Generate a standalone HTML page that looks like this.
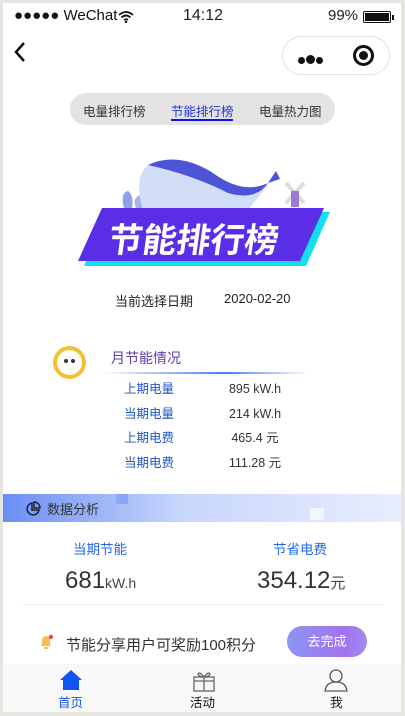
<!DOCTYPE html>
<html><head><meta charset="utf-8"><style>
*{margin:0;padding:0;box-sizing:border-box}
body{width:405px;height:716px;background:#e6e5e1;font-family:"Liberation Sans","Noto Sans CJK SC",sans-serif;position:relative;overflow:hidden}
.page{position:absolute;left:3px;top:3px;width:398px;height:709px;background:#fff;overflow:hidden}
.a{position:absolute;white-space:nowrap}
</style></head><body>
<div class="page">
<div class="a" style="left:11px;top:4px;font-size:15px;color:#111">●●●●● WeChat</div>
<svg class="a" style="left:115px;top:8px" width="16" height="12" viewBox="0 0 16 12"><path d="M1 4Q8 -2 15 4M3.5 6.5Q8 2.5 12.5 6.5M6 9Q8 7.5 10 9" stroke="#111" stroke-width="1.8" fill="none"/><circle cx="8" cy="11" r="1.2" fill="#111"/></svg>
<div class="a" style="left:180px;top:4px;font-size:16px;color:#222">14:12</div>
<div class="a" style="left:325px;top:4px;font-size:15px;color:#222">99%</div>
<div class="a" style="left:360px;top:8px;width:28px;height:12px;border:1.5px solid #111;border-radius:2px;padding:1px"><div style="width:100%;height:100%;background:#111"></div></div>
<div class="a" style="left:389px;top:12px;width:2px;height:5px;background:#111"></div>
<svg class="a" style="left:10px;top:38px" width="14" height="22" viewBox="0 0 14 22"><path d="M11 2L3 11L11 20" stroke="#111" stroke-width="2.5" fill="none"/></svg>
<div class="a" style="left:279px;top:33px;width:108px;height:39px;border:1px solid #e3e3e3;border-radius:20px"></div>
<div class="a" style="left:295px;top:48px"><span style="display:inline-block;width:7px;height:7px;border-radius:50%;background:#111"></span><span style="display:inline-block;width:9px;height:9px;border-radius:50%;background:#111;margin:0 1px"></span><span style="display:inline-block;width:7px;height:7px;border-radius:50%;background:#111"></span></div>
<div class="a" style="left:350px;top:42px;width:21px;height:21px;border:3px solid #111;border-radius:50%"><div style="margin:3px;width:9px;height:9px;border-radius:50%;background:#111"></div></div>

<div class="a" style="left:67px;top:90px;width:265px;height:32px;background:#e3e3e3;border-radius:16px"></div>
<div class="a" style="left:80px;top:98px;font-size:12.5px;color:#333">电量排行榜</div>
<div class="a" style="left:168px;top:98px;font-size:12.5px;color:#2233dd">节能排行榜</div>
<div class="a" style="left:168px;top:116px;width:62px;height:2px;background:#1111ee"></div>
<div class="a" style="left:256px;top:98px;font-size:12.5px;color:#333">电量热力图</div>

<svg class="a" style="left:115px;top:150px" width="220" height="60" viewBox="0 0 220 60">
<path d="M6 55Q2 40 10 38Q16 42 14 55Z" fill="#8fa2e8"/>
<path d="M18 55Q14 45 22 42Q28 48 26 55Z" fill="#a3b4ec"/>
<path d="M25 57Q15 25 30 12Q60 -2 100 25Q120 40 150 32L130 57Z" fill="#d2ddf8"/>
<path d="M30 12Q60 -2 95 20Q125 42 150 30Q138 48 110 40Q75 22 30 12Z" fill="#4e54d8"/>
<path d="M150 30L158 18L162 26Z" fill="#4e54d8"/>
<path d="M168 30L186 50M186 30L168 50" stroke="#ddd" stroke-width="4"/><rect x="173" y="38" width="8" height="16" fill="#9a7ad8"/>
</svg>
<svg class="a" style="left:75px;top:203px" width="255" height="62" viewBox="0 0 255 62">
<path d="M30 6L252 6L228 60L6 60Z" fill="#10e0f0"/>
<path d="M24 2L246 2L222 55L0 55Z" fill="#5a2de6"/>
</svg>
<div class="a" style="left:106px;top:210px;font-size:34px;font-weight:bold;color:#fff;transform:skewX(-8deg)">节能排行榜</div>

<div class="a" style="left:112px;top:288px;font-size:13px;color:#222">当前选择日期</div>
<div class="a" style="left:221px;top:288px;font-size:13px;color:#222">2020-02-20</div>

<div class="a" style="left:50px;top:343px;width:33px;height:33px;border-radius:50%;background:#f5c030"><div style="margin:4px;width:25px;height:25px;border-radius:50%;background:#fff"><div style="position:absolute;left:11px;top:13px;width:4px;height:4px;border-radius:50%;background:#333"></div><div style="position:absolute;left:18px;top:13px;width:4px;height:4px;border-radius:50%;background:#333"></div></div></div>
<div class="a" style="left:108px;top:345px;font-size:14px;color:#5b3fa8">月节能情况</div>
<div class="a" style="left:96px;top:369px;width:210px;height:1.5px;background:linear-gradient(90deg,#fff,#4a7df0 60%,#fff)"></div>
<div class="a" style="left:121px;top:374px;font-size:12.5px;color:#2255cc;line-height:24.7px">上期电量<br>当期电量<br>上期电费<br>当期电费</div>
<div class="a" style="left:222px;top:374px;width:60px;text-align:center;font-size:12.5px;color:#333;line-height:24.7px">895 kW.h<br>214 kW.h<br>465.4 元<br>111.28 元</div>

<div class="a" style="left:0;top:491px;width:398px;height:28px;background:linear-gradient(90deg,#6a8ef5,#c8d6fb 45%,#e8eefd)"></div>
<div class="a" style="left:113px;top:491px;width:12px;height:10px;background:#8aa6f7"></div>
<div class="a" style="left:307px;top:505px;width:14px;height:12px;background:#f3f6fe"></div>
<svg class="a" style="left:22px;top:498px" width="16" height="16" viewBox="0 0 16 16"><path d="M7 2A6 6 0 1 0 14 9L7 9Z" fill="none" stroke="#223" stroke-width="1.5"/><path d="M9 1L9 7L15 7A6 6 0 0 0 9 1Z" fill="none" stroke="#223" stroke-width="1.5"/></svg>
<div class="a" style="left:44px;top:496px;font-size:13px;color:#333">数据分析</div>

<div class="a" style="left:70px;top:535px;font-size:13.5px;color:#2266ee">当期节能</div>
<div class="a" style="left:270px;top:535px;font-size:13.5px;color:#2266ee">节省电费</div>
<div class="a" style="left:62px;top:564px;font-size:24px;color:#333">681<span style="font-size:14px;color:#444">kW.h</span></div>
<div class="a" style="left:254px;top:564px;font-size:24px;color:#333">354.12<span style="font-size:15px;color:#444">元</span></div>
<div class="a" style="left:20px;top:601px;width:360px;height:1px;background:#eee"></div>

<svg class="a" style="left:36px;top:630px" width="16" height="18" viewBox="0 0 16 18"><path d="M2 13Q3 12 3 8Q3 3 7 3Q11 3 11 8Q11 12 12 13Z" fill="#f5c050"/><rect x="5" y="14" width="4" height="2" fill="#f5c050"/><circle cx="12" cy="4" r="2.2" fill="#e44"/></svg>
<div class="a" style="left:63px;top:631px;font-size:15px;color:#333">节能分享用户可奖励100积分</div>
<div class="a" style="left:284px;top:623px;width:80px;height:31px;border-radius:16px;background:linear-gradient(90deg,#8a96f2,#a472f0 70%,#9e8af2);color:#fff;font-size:13px;text-align:center;line-height:31px">去完成</div>

<div class="a" style="left:0;top:661px;width:398px;height:48px;background:#f8f8f8"></div>
<svg class="a" style="left:56px;top:666px" width="24" height="22" viewBox="0 0 24 22"><path d="M12 1L1 11L4 11L4 21L20 21L20 11L23 11Z" fill="#1055f0"/></svg>
<div class="a" style="left:55px;top:689px;font-size:12.5px;color:#1a55ee">首页</div>
<svg class="a" style="left:189px;top:667px" width="24" height="22" viewBox="0 0 24 22"><rect x="2" y="7" width="20" height="14" fill="none" stroke="#666" stroke-width="1.3"/><path d="M2 11H22M12 7V21M12 7Q7 1 6 4Q7 7 12 7Q17 7 18 4Q17 1 12 7" fill="none" stroke="#666" stroke-width="1.3"/></svg>
<div class="a" style="left:187px;top:689px;font-size:12.5px;color:#111">活动</div>
<svg class="a" style="left:321px;top:666px" width="24" height="23" viewBox="0 0 24 23"><circle cx="12" cy="7" r="6" fill="none" stroke="#555" stroke-width="1.3"/><path d="M1 22Q2 13 12 13Q22 13 23 22Z" fill="none" stroke="#555" stroke-width="1.3"/></svg>
<div class="a" style="left:327px;top:689px;font-size:12.5px;color:#111">我</div>
</div>
</body></html>
